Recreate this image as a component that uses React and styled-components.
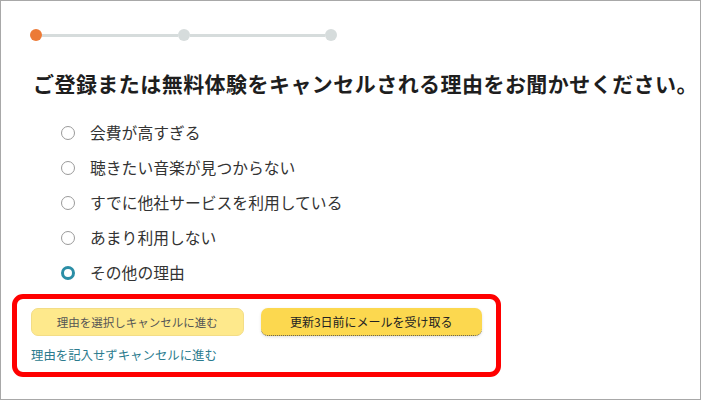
import React, { useState } from "react";
import styled, { createGlobalStyle } from "styled-components";

const GlobalStyle = createGlobalStyle`
    html, body {
        margin: 0;
        padding: 0;
        background: #ffffff;
    }
    body {
        font-family: "Noto Sans CJK JP", "Noto Sans", sans-serif;
    }
`;

const reasons = [
    "会費が高すぎる",
    "聴きたい音楽が見つからない",
    "すでに他社サービスを利用している",
    "あまり利用しない",
    "その他の理由",
];

function App() {
    let [selected, setSelected] = useState(4);
    return (
        <>
            <GlobalStyle />
            <Frame>
                <Progress>
                    <Dot active />
                    <Line />
                    <Dot />
                    <Line />
                    <Dot />
                </Progress>
                <Title>ご登録または無料体験をキャンセルされる理由をお聞かせください。</Title>
                <Options>
                    {reasons.map(function (r, i) {
                        return (
                            <Option key={i} onClick={() => setSelected(i)}>
                                <Radio checked={selected === i} />
                                <span>{r}</span>
                            </Option>
                        );
                    })}
                </Options>
                <ActionBox>
                    <ButtonRow>
                        <PaleButton>理由を選択しキャンセルに進む</PaleButton>
                        <MainButton>更新3日前にメールを受け取る</MainButton>
                    </ButtonRow>
                    <SkipLink href="#">理由を記入せずキャンセルに進む</SkipLink>
                </ActionBox>
            </Frame>
        </>
    );
}

const Frame = styled.div`
    box-sizing: border-box;
    width: 701px;
    height: 400px;
    border: 1px solid #a8a8a8;
    padding-top: 28px;
    overflow: hidden;
`;
const Progress = styled.div`
    display: flex;
    align-items: center;
    margin-left: 29px;
    width: 307px;
`;
const Dot = styled.div`
    flex: none;
    width: 12px;
    height: 12px;
    border-radius: 50%;
    background: ${(props) => (props.active ? "#ec7a36" : "#d6dcdc")};
`;
const Line = styled.div`
    flex: 1;
    height: 3px;
    background: #d6dcdc;
`;
const Title = styled.h1`
    margin: 27px 0 0 32px;
    font-size: 21px;
    letter-spacing: 0.45px;
    line-height: 30px;
    font-weight: 700;
    color: #1e1e1e;
    white-space: nowrap;
`;
const Options = styled.div`
    display: flex;
    flex-direction: column;
    margin: 17px 0 0 60px;
`;
const Option = styled.label`
    display: flex;
    align-items: center;
    height: 35px;
    gap: 15px;
    font-size: 15.8px;
    color: #333333;
    cursor: pointer;
`;
const Radio = styled.span`
    box-sizing: border-box;
    flex: none;
    width: 14px;
    height: 14px;
    border-radius: 50%;
    background: #ffffff;
    border: ${(props) => (props.checked ? "3px solid #2b8ea6" : "1px solid #9a9a9a")};
`;
const ActionBox = styled.div`
    box-sizing: border-box;
    display: flex;
    flex-direction: column;
    width: 489px;
    height: 83px;
    margin: 4px 0 0 11px;
    padding: 9px 14px 0 14px;
    border: 5px solid #ff0000;
    border-radius: 11px;
`;
const ButtonRow = styled.div`
    display: flex;
    gap: 17px;
`;
const PaleButton = styled.button`
    box-sizing: border-box;
    width: 214px;
    height: 28px;
    border: 1px solid #f3dd86;
    border-radius: 7px;
    background: #fee98c;
    color: #555555;
    font-family: inherit;
    font-size: 11.5px;
    cursor: pointer;
`;
const MainButton = styled(PaleButton)`
    width: 223px;
    border: none;
    border-bottom: 1px dotted #555555;
    background: #fcd84f;
    color: #222222;
    font-size: 12px;
    box-shadow: 0 1px 3px rgba(0, 0, 0, 0.12);
`;
const SkipLink = styled.a`
    margin-top: 10px;
    font-size: 12.4px;
    line-height: 18px;
    color: #2b7b8e;
    text-decoration: none;
`;

export default App;
